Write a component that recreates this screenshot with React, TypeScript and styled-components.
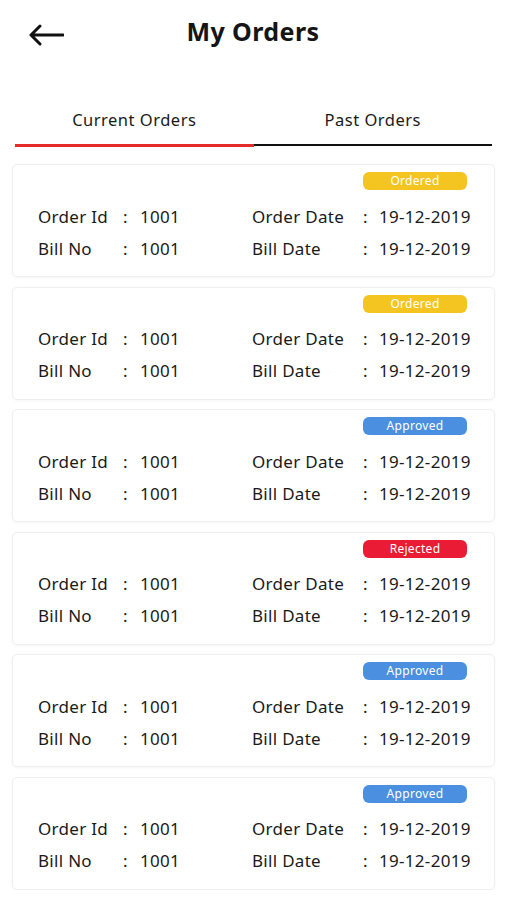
import styled, { createGlobalStyle } from "styled-components";

const GlobalStyle = createGlobalStyle`
    body {
        margin: 0;
        background: #ffffff;
        font-family: "Noto Sans", "DejaVu Sans", sans-serif;
        color: #111111;
    }
`

const Page = styled.div`
    width: 506px;
    box-sizing: border-box;
`

const Header = styled.header`
    display: grid;
    grid-template-columns: 120px 1fr 120px;
    align-items: center;
    height: 66px;
`

const BackButton = styled.div`
    display: flex;
    align-items: center;
    padding-left: 28px;
    padding-top: 4px;
`

const Title = styled.h1`
    margin: 0 0 4px;
    text-align: center;
    font-size: 25px;
    font-weight: 700;
    letter-spacing: 0.4px;
    color: #151515;
`

const Tabs = styled.nav`
    display: flex;
    margin: 42px 14px 0 15px;
`

const Tab = styled.div<{ $active?: boolean }>`
    flex: 1;
    text-align: center;
    font-size: 16.5px;
    letter-spacing: 0.5px;
    color: #1a1a1a;
    padding-bottom: 13px;
    border-bottom: ${props => (props.$active ? "3px solid #e52a2a" : "2px solid #111111")};
    margin-bottom: ${props => (props.$active ? "0" : "1px")};
`

const OrderList = styled.div`
    display: flex;
    flex-direction: column;
    gap: 9.6px;
    margin: 17px 11px 0 12px;
`

const Card = styled.div`
    display: flex;
    flex-direction: column;
    height: 113px;
    box-sizing: border-box;
    border: 1px solid #efefef;
    border-radius: 5px;
    box-shadow: 0 1px 3px rgba(0, 0, 0, 0.04);
    padding: 7px 16px 0 25px;
`

const Badge = styled.div<{ $color: string }>`
    align-self: flex-end;
    width: 104px;
    height: 18px;
    line-height: 18px;
    margin-right: 11px;
    border-radius: 6px;
    background: ${props => props.$color};
    color: #ffffff;
    font-size: 12px;
    letter-spacing: 0.3px;
    text-align: center;
`

const InfoGrid = styled.div`
    display: grid;
    grid-template-columns: 85px 17px 112px 111px 16px 1fr;
    grid-auto-rows: 32px;
    align-items: center;
    margin-top: 10px;
    font-size: 17px;
    letter-spacing: 0.3px;
    color: #1a1a1a;
    white-space: nowrap;
`

const Label = styled.span``

const Colon = styled.span``

const Value = styled.span``

type Status = "Ordered" | "Approved" | "Rejected";

const statusColors: Record<Status, string> = {
    Ordered: "#f4c520",
    Approved: "#4a8fe0",
    Rejected: "#ea1b34",
}

const orders: Status[] = ["Ordered", "Ordered", "Approved", "Rejected", "Approved", "Approved"];

function BackArrow() {
    return (
        <svg width="36" height="22" viewBox="0 0 36 22" fill="none">
            <path d="M35 11H3M12 2L3 11L12 20" stroke="#111" strokeWidth="3" strokeLinecap="round" strokeLinejoin="round" />
        </svg>
    )
}

export default function App() {
    return (
        <Page>
            <GlobalStyle />
            <Header>
                <BackButton><BackArrow /></BackButton>
                <Title>My Orders</Title>
                <div />
            </Header>
            <Tabs>
                <Tab $active>Current Orders</Tab>
                <Tab>Past Orders</Tab>
            </Tabs>
            <OrderList>
                {orders.map((status, i) => (
                    <Card key={i}>
                        <Badge $color={statusColors[status]}>{status}</Badge>
                        <InfoGrid>
                            <Label>Order Id</Label>
                            <Colon>:</Colon>
                            <Value>1001</Value>
                            <Label>Order Date</Label>
                            <Colon>:</Colon>
                            <Value>19-12-2019</Value>
                            <Label>Bill No</Label>
                            <Colon>:</Colon>
                            <Value>1001</Value>
                            <Label>Bill Date</Label>
                            <Colon>:</Colon>
                            <Value>19-12-2019</Value>
                        </InfoGrid>
                    </Card>
                ))}
            </OrderList>
        </Page>
    )
}
